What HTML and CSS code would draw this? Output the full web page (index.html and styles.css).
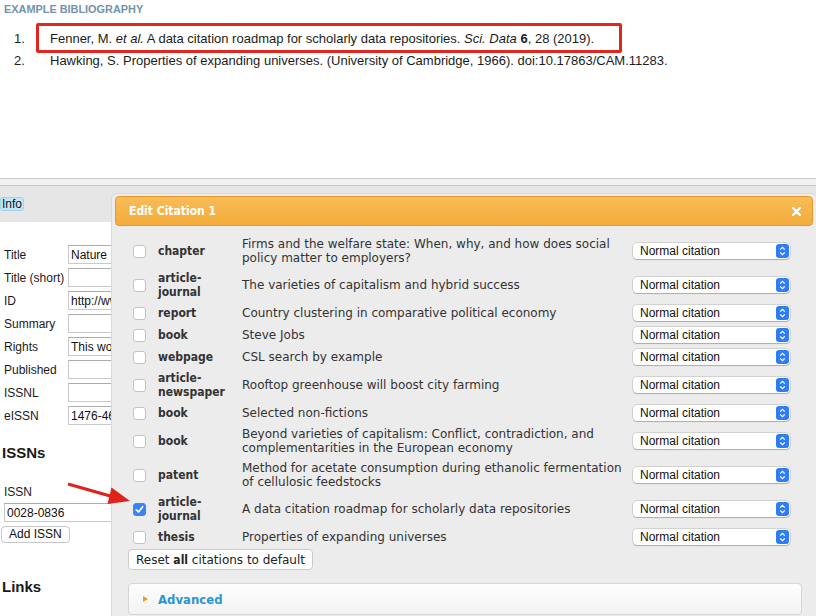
FILE: index.html
```html
<!DOCTYPE html>
<html lang="en">
<head>
<meta charset="utf-8">
<title>Edit Citation</title>
<link rel="stylesheet" href="styles.css">
</head>
<body>
<section class="biblio">
  <h2 class="biblio-title">Example Bibliography</h2>
  <ol class="biblio-list">
    <li class="biblio-item"><span class="biblio-num">1.</span><span class="biblio-text marked">Fenner, M. <i>et al.</i> A data citation roadmap for scholarly data repositories. <i>Sci. Data</i> <b>6</b>, 28 (2019).</span></li>
    <li class="biblio-item"><span class="biblio-num">2.</span><span class="biblio-text">Hawking, S. Properties of expanding universes. (University of Cambridge, 1966). doi:10.17863/CAM.11283.</span></li>
  </ol>
</section>
<div class="divider"></div>
<section class="sidebar">
  <div class="sidebar-head"><span class="tab">Info</span></div>
  <div class="fields">
    <label class="field-label">Title</label><input class="field-input" value="Nature">
    <label class="field-label">Title (short)</label><input class="field-input" value="">
    <label class="field-label">ID</label><input class="field-input" value="http://www.nature.com/">
    <label class="field-label">Summary</label><input class="field-input" value="">
    <label class="field-label">Rights</label><input class="field-input" value="This work is licensed">
    <label class="field-label">Published</label><input class="field-input" value="">
    <label class="field-label">ISSNL</label><input class="field-input" value="">
    <label class="field-label">eISSN</label><input class="field-input" value="1476-4687">
  </div>
  <h3 class="side-heading issns">ISSNs</h3>
  <div class="issn-block">
    <div class="field-label">ISSN</div>
    <input class="field-input wide" value="0028-0836">
    <button class="small-btn">Add ISSN</button>
  </div>
  <h3 class="side-heading links">Links</h3>
</section>

<div class="dialog">
  <div class="dialog-head">
    <span class="dialog-title">Edit Citation 1</span>
    <svg class="dialog-close" width="9" height="9" viewBox="0 0 9 9"><path d="M1 1 L8 8 M8 1 L1 8" stroke="#fff" stroke-width="2.4" stroke-linecap="round"/></svg>
  </div>
  <div class="cite-list">
    <div class="cite-row"><span class="check"></span><span class="cite-type">chapter</span><span class="cite-title">Firms and the welfare state: When, why, and how does social policy matter to employers?</span><div class="cite-style"><span>Normal citation</span><span class="caret"><svg width="13" height="14" viewBox="0 0 13 14"><path d="M4.2 5.6 L6.5 3.4 L8.8 5.6 M4.2 8.4 L6.5 10.6 L8.8 8.4" fill="none" stroke="#fff" stroke-width="1.3"/></svg></span></div></div>
    <div class="cite-row"><span class="check"></span><span class="cite-type">article-journal</span><span class="cite-title">The varieties of capitalism and hybrid success</span><div class="cite-style"><span>Normal citation</span><span class="caret"><svg width="13" height="14" viewBox="0 0 13 14"><path d="M4.2 5.6 L6.5 3.4 L8.8 5.6 M4.2 8.4 L6.5 10.6 L8.8 8.4" fill="none" stroke="#fff" stroke-width="1.3"/></svg></span></div></div>
    <div class="cite-row"><span class="check"></span><span class="cite-type">report</span><span class="cite-title">Country clustering in comparative political economy</span><div class="cite-style"><span>Normal citation</span><span class="caret"><svg width="13" height="14" viewBox="0 0 13 14"><path d="M4.2 5.6 L6.5 3.4 L8.8 5.6 M4.2 8.4 L6.5 10.6 L8.8 8.4" fill="none" stroke="#fff" stroke-width="1.3"/></svg></span></div></div>
    <div class="cite-row"><span class="check"></span><span class="cite-type">book</span><span class="cite-title">Steve Jobs</span><div class="cite-style"><span>Normal citation</span><span class="caret"><svg width="13" height="14" viewBox="0 0 13 14"><path d="M4.2 5.6 L6.5 3.4 L8.8 5.6 M4.2 8.4 L6.5 10.6 L8.8 8.4" fill="none" stroke="#fff" stroke-width="1.3"/></svg></span></div></div>
    <div class="cite-row"><span class="check"></span><span class="cite-type">webpage</span><span class="cite-title">CSL search by example</span><div class="cite-style"><span>Normal citation</span><span class="caret"><svg width="13" height="14" viewBox="0 0 13 14"><path d="M4.2 5.6 L6.5 3.4 L8.8 5.6 M4.2 8.4 L6.5 10.6 L8.8 8.4" fill="none" stroke="#fff" stroke-width="1.3"/></svg></span></div></div>
    <div class="cite-row"><span class="check"></span><span class="cite-type">article-newspaper</span><span class="cite-title">Rooftop greenhouse will boost city farming</span><div class="cite-style"><span>Normal citation</span><span class="caret"><svg width="13" height="14" viewBox="0 0 13 14"><path d="M4.2 5.6 L6.5 3.4 L8.8 5.6 M4.2 8.4 L6.5 10.6 L8.8 8.4" fill="none" stroke="#fff" stroke-width="1.3"/></svg></span></div></div>
    <div class="cite-row"><span class="check"></span><span class="cite-type">book</span><span class="cite-title">Selected non-fictions</span><div class="cite-style"><span>Normal citation</span><span class="caret"><svg width="13" height="14" viewBox="0 0 13 14"><path d="M4.2 5.6 L6.5 3.4 L8.8 5.6 M4.2 8.4 L6.5 10.6 L8.8 8.4" fill="none" stroke="#fff" stroke-width="1.3"/></svg></span></div></div>
    <div class="cite-row"><span class="check"></span><span class="cite-type">book</span><span class="cite-title">Beyond varieties of capitalism: Conflict, contradiction, and complementarities in the European economy</span><div class="cite-style"><span>Normal citation</span><span class="caret"><svg width="13" height="14" viewBox="0 0 13 14"><path d="M4.2 5.6 L6.5 3.4 L8.8 5.6 M4.2 8.4 L6.5 10.6 L8.8 8.4" fill="none" stroke="#fff" stroke-width="1.3"/></svg></span></div></div>
    <div class="cite-row"><span class="check"></span><span class="cite-type">patent</span><span class="cite-title">Method for acetate consumption during ethanolic fermentation of cellulosic feedstocks</span><div class="cite-style"><span>Normal citation</span><span class="caret"><svg width="13" height="14" viewBox="0 0 13 14"><path d="M4.2 5.6 L6.5 3.4 L8.8 5.6 M4.2 8.4 L6.5 10.6 L8.8 8.4" fill="none" stroke="#fff" stroke-width="1.3"/></svg></span></div></div>
    <div class="cite-row"><span class="check checked"><svg width="13" height="13" viewBox="0 0 13 13"><path d="M3.3 6.8 L5.5 9 L9.7 3.8" fill="none" stroke="#fff" stroke-width="1.7" stroke-linecap="round" stroke-linejoin="round"/></svg></span><span class="cite-type">article-journal</span><span class="cite-title">A data citation roadmap for scholarly data repositories</span><div class="cite-style"><span>Normal citation</span><span class="caret"><svg width="13" height="14" viewBox="0 0 13 14"><path d="M4.2 5.6 L6.5 3.4 L8.8 5.6 M4.2 8.4 L6.5 10.6 L8.8 8.4" fill="none" stroke="#fff" stroke-width="1.3"/></svg></span></div></div>
    <div class="cite-row"><span class="check"></span><span class="cite-type">thesis</span><span class="cite-title">Properties of expanding universes</span><div class="cite-style"><span>Normal citation</span><span class="caret"><svg width="13" height="14" viewBox="0 0 13 14"><path d="M4.2 5.6 L6.5 3.4 L8.8 5.6 M4.2 8.4 L6.5 10.6 L8.8 8.4" fill="none" stroke="#fff" stroke-width="1.3"/></svg></span></div></div>
  </div>
  <button class="reset-btn">Reset <b>all</b> citations to default</button>
  <div class="advanced"><span class="tri"></span><span class="advanced-label">Advanced</span></div>
</div>

<svg class="pointer-arrow" width="80" height="40" viewBox="60 475 80 40">
  <line x1="68" y1="484" x2="112" y2="496.5" stroke="#e0231a" stroke-width="3.2"/>
  <polygon points="130,501 111.5,487.5 107.5,504" fill="#e0231a"/>
</svg>
</body>
</html>
```
FILE: styles.css
```css
*, *::before, *::after { box-sizing: border-box; }
html, body { margin: 0; padding: 0; }
body {
  width: 816px;
  height: 616px;
  overflow: hidden;
  position: relative;
  background: #fff;
  font-family: "Liberation Sans", Arial, sans-serif;
  font-size: 12px;
  color: #222;
}

/* Bibliography */
.biblio { height: 178px; padding: 2px 4px 0; }
.biblio-title {
  margin: 0;
  font-size: 10.9px;
  line-height: 14px;
  font-weight: bold;
  text-transform: uppercase;
  color: #7392ab;
}
.biblio-list { list-style: none; margin: 12px 0 0; padding: 0; }
.biblio-item { display: flex; line-height: 22px; font-size: 13px; color: #1c1c1c; }
.biblio-num { width: 46px; padding-left: 10px; flex: none; }
.biblio-text { position: relative; display: block; }
.biblio-text.marked::after {
  content: "";
  position: absolute;
  left: -14px;
  top: -5px;
  width: 586px;
  height: 30px;
  border: 3px solid #e1261d;
  border-radius: 2px;
}

.divider {
  height: 8px;
  border-top: 1px solid #c8c8c8;
  border-bottom: 1px solid #c8c8c8;
  background: #f1f1f1;
}

/* Sidebar */
.sidebar-head { height: 36px; background: #e6e6e6; padding-top: 11px; }
.tab {
  display: inline-block;
  background: #c4e7f7;
  border: 1px solid #9fd3ea;
  border-radius: 3px;
  padding: 0 1px;
  line-height: 12px;
  font-size: 12px;
  color: #111;
}
.fields {
  width: 300px;
  padding: 23px 0 0 4px;
  display: grid;
  grid-template-columns: 64px 220px;
  row-gap: 4px;
  align-items: center;
}
.field-label { font-size: 12px; line-height: 14px; color: #1a1a1a; }
.field-input {
  height: 19px;
  border: 1px solid #c9c9c9;
  border-top-color: #ababab;
  font: 12px "Liberation Sans", Arial, sans-serif;
  color: #111;
  padding: 0 2px;
  margin: 0;
  background: #fff;
  width: 220px;
  outline: none;
}
.side-heading { margin: 0; padding-left: 2px; font-size: 15px; line-height: 18px; font-weight: bold; color: #1a1a1a; }
.issns { margin-top: 19px; }
.issn-block { padding-left: 4px; margin-top: 23px; display: flex; flex-direction: column; align-items: flex-start; }
.issn-block .field-input { margin-top: 4px; width: 240px; }
.small-btn {
  margin: 4px 0 0 -3px;
  height: 17px;
  padding: 0 7px;
  background: #fff;
  border: 1px solid #c6c6c6;
  border-radius: 4px;
  font: 12px "Liberation Sans", Arial, sans-serif;
  color: #111;
  line-height: 15px;
}
.links { margin-top: 35px; }

/* Dialog */
.dialog {
  position: absolute;
  left: 111px;
  top: 193px;
  width: 706px;
  height: 430px;
  background: #ececec;
  border: 1px solid #dadada;
  border-radius: 5px;
  padding: 2px 3px;
  font-family: "DejaVu Sans", Verdana, sans-serif;
  color: #333;
}
.dialog-head {
  height: 30px;
  border: 1px solid #e59a2b;
  border-radius: 4px;
  background: linear-gradient(#f8bc58, #f4ab3b);
  display: flex;
  align-items: center;
  justify-content: space-between;
  padding: 0 11px 0 13px;
}
.dialog-title { color: #fff; font-weight: bold; font-size: 12px; font-family: "DejaVu Sans Condensed", "DejaVu Sans", sans-serif; }
.dialog-close { display: block; }

.cite-list { margin-top: 8px; }
.cite-row {
  display: grid;
  grid-template-columns: 25px 84px 391px 157px;
  align-items: center;
  min-height: 22px;
  padding: 3px 0 3px 18px;
  line-height: 14px;
}
.check {
  width: 13px;
  height: 13px;
  border: 1px solid #c4c4c4;
  border-radius: 3px;
  background: #fff;
  display: block;
}
.check.checked { background: #3a84f7; border-color: #3a84f7; position: relative; }
.check.checked svg { position: absolute; left: -1px; top: -1px; }
.cite-type { font-weight: bold; font-size: 12px; font-family: "DejaVu Sans Condensed", "DejaVu Sans", sans-serif; color: #333; }
.cite-title { font-size: 12px; color: #333; padding-right: 5px; }
.cite-style {
  height: 16px;
  background: #fff;
  border-radius: 4px;
  box-shadow: 0 0 0 0.5px rgba(0,0,0,0.22), 0 1px 1px rgba(0,0,0,0.18);
  display: flex;
  align-items: center;
  justify-content: space-between;
  padding: 0 1px 0 7px;
  font: 12px "Liberation Sans", Arial, sans-serif;
  color: #111;
}
.caret { width: 13px; height: 14px; border-radius: 3px; background: #2e7cf6; display: block; }
.caret svg { display: block; }

.reset-btn {
  display: block;
  margin: 1px 0 0 13px;
  height: 21px;
  padding: 0 7px;
  background: #fff;
  border: 1px solid #cbcbcb;
  border-radius: 4px;
  font: 12px "DejaVu Sans", Verdana, sans-serif;
  color: #222;
}
.reset-btn b { font-family: "DejaVu Sans Condensed", "DejaVu Sans", sans-serif; }
.advanced {
  margin: 13px 11px 0 13px;
  height: 32px;
  border: 1px solid #d6d6d6;
  border-radius: 4px;
  background: linear-gradient(#fdfdfd, #f3f3f3);
  display: flex;
  align-items: center;
  padding-left: 14px;
}
.tri {
  width: 0;
  height: 0;
  border-top: 3.5px solid transparent;
  border-bottom: 3.5px solid transparent;
  border-left: 5px solid #ef9a22;
}
.advanced-label { margin-left: 10px; font-weight: bold; font-size: 13px; font-family: "DejaVu Sans Condensed", "DejaVu Sans", sans-serif; color: #2896d3; }

.pointer-arrow { position: absolute; left: 60px; top: 475px; }
```
